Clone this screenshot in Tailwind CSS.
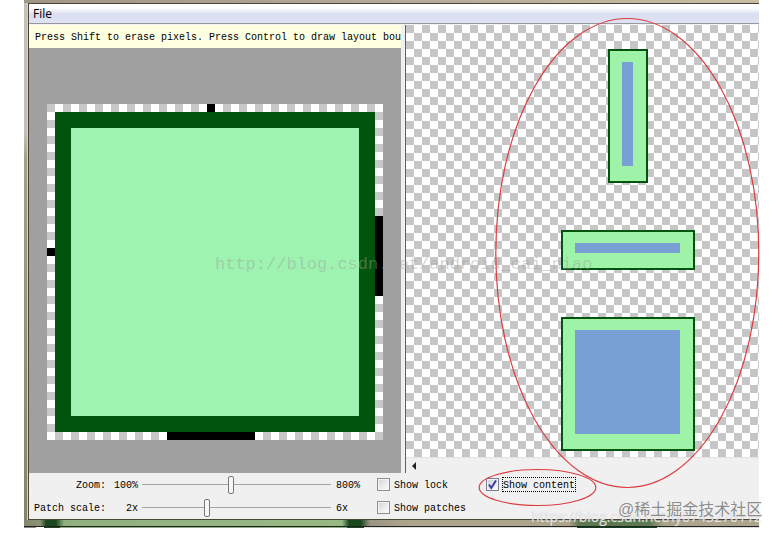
<!DOCTYPE html>
<html lang="en">
<head>
<meta charset="utf-8">
<title>Draw 9-patch</title>
<script src="https://cdn.jsdelivr.net/npm/@tailwindcss/browser@4"></script>
</head>
<body class="bg-white">
<div class="relative mx-6 overflow-hidden font-['Liberation_Mono',monospace] text-[10px] leading-3 text-black">
  <!-- glass frame -->
  <div class="h-[3px] bg-linear-to-r from-[#a09684] via-[#b5a999] to-[#c9bda2]"></div>
  <div class="flex">
    <div class="w-[4px] shrink-0 border-r border-[#d8d4c0] bg-linear-to-b from-[#c4c0b8] from-25% via-[#a5a084] via-30% to-[#84846c]"></div>
    <div class="min-w-0 flex-1 border-t border-b border-l border-[#4a4438]">
      <nav class="flex h-[20px] items-center border-b border-[#98989c] bg-linear-to-b from-white from-20% via-[#d9ddf0] via-55% to-[#dfe3f4]">
        <button class="px-1 font-['Open_Sans',sans-serif] text-[12px] leading-4">File</button>
      </nav>
      <main class="flex border-t border-[#f4f4f4] bg-[#f0f0f0]">
        <section class="flex h-[448px] w-[372px] shrink-0 flex-col bg-[#a0a0a0]">
          <p class="overflow-hidden bg-[#ffffe1] pt-[7px] pb-[4px] pl-[6px] leading-3 whitespace-nowrap">Press Shift to erase pixels. Press Control to draw layout bou</p>
          <svg class="mt-[56px] ml-[18px] block" width="336" height="336" viewBox="0 0 336 336" shape-rendering="crispEdges" role="img" aria-label="Patch editor">
            <defs><pattern id="cells" width="16" height="16" patternUnits="userSpaceOnUse"><path fill="#fff" d="M0 0h16v16H0z"/><path fill="#c8c8c8" d="M0 0h8v8H0zM8 8h8v8H8z"/></pattern></defs>
            <path fill="url(#cells)" d="M0 0h336v336H0z"/>
            <path fill="#00540e" d="M8 8h320v320H8z"/>
            <path fill="#9ef3b0" d="M24 24h288v288H24z"/>
            <path d="M160 0h8v8h-8zM0 144h8v8H0zM328 112h8v80h-8zM120 328h88v8h-88z"/>
          </svg>
        </section>
        <div class="w-[5px] shrink-0 border-r border-[#606060] bg-[#f0f0f0]"></div>
        <section class="flex min-w-0 flex-1 flex-col overflow-hidden">
          <div class="flex h-[432px] w-[444px] flex-col items-center gap-[47px] bg-[conic-gradient(#c6c6c6_25%,#fff_0_50%,#c6c6c6_0_75%,#fff_0)] bg-[position:8px_0px] bg-size-[16px_16px] pt-6">
            <div class="flex h-[134px] w-[40px] border-2 border-[#00540e] bg-[#9ef3a8] pt-[11px] pr-[13px] pb-[15px] pl-[12px]"><div class="flex-1 bg-[#78a0d4]"></div></div>
            <div class="flex h-[40px] w-[134px] border-2 border-[#00540e] bg-[#9ef3a8] pt-[11px] pr-[13px] pb-[15px] pl-[12px]"><div class="flex-1 bg-[#78a0d4]"></div></div>
            <div class="flex h-[134px] w-[134px] border-2 border-[#00540e] bg-[#9ef3a8] pt-[11px] pr-[13px] pb-[15px] pl-[12px]"><div class="flex-1 bg-[#78a0d4]"></div></div>
          </div>
          <div class="flex h-4 items-center border-t border-[#e4e4e4] bg-[#f0f0f0] pl-[6px]">
            <button aria-label="Scroll left"><svg class="block" width="5" height="8" viewBox="0 0 5 8"><path d="M4 0v8L0 4z" fill="#222"/></svg></button>
          </div>
        </section>
      </main>
      <form class="flex h-[46px] bg-[#f0f0f0]">
        <div class="grid w-[333px] shrink-0 grid-cols-[77px_32px_197px_1fr] grid-rows-[23px_23px] items-center">
          <label for="zoom" class="pt-[2px] text-right">Zoom:</label><span class="pt-[2px] text-right">100%</span>
          <input id="zoom" type="range" min="100" max="800" value="428" class="mx-1 h-[20px] appearance-none bg-[linear-gradient(#a4a4a4,#a4a4a4)] bg-size-[100%_1px] bg-center bg-no-repeat [&::-webkit-slider-thumb]:h-[18px] [&::-webkit-slider-thumb]:w-[6px] [&::-webkit-slider-thumb]:appearance-none [&::-webkit-slider-thumb]:rounded-[2px] [&::-webkit-slider-thumb]:border [&::-webkit-slider-thumb]:border-[#777] [&::-webkit-slider-thumb]:bg-[#f6f6f6]">
          <span class="pt-[2px] pl-[1px]">800%</span>
          <label for="scale" class="pt-[2px] text-right">Patch scale:</label><span class="pt-[2px] text-right">2x</span>
          <input id="scale" type="range" min="200" max="600" value="336" class="mx-1 h-[20px] appearance-none bg-[linear-gradient(#a4a4a4,#a4a4a4)] bg-size-[100%_1px] bg-center bg-no-repeat [&::-webkit-slider-thumb]:h-[18px] [&::-webkit-slider-thumb]:w-[6px] [&::-webkit-slider-thumb]:appearance-none [&::-webkit-slider-thumb]:rounded-[2px] [&::-webkit-slider-thumb]:border [&::-webkit-slider-thumb]:border-[#777] [&::-webkit-slider-thumb]:bg-[#f6f6f6]">
          <span class="pt-[2px] pl-[1px]">6x</span>
        </div>
        <div class="grid grid-cols-[109px_auto] grid-rows-[23px_23px] items-center pl-[15px]">
          <label class="flex items-center gap-1"><input type="checkbox" class="size-[13px] appearance-none border border-[#8e8f8f] bg-linear-to-br from-[#d4d4d8] to-white shadow-[inset_0_0_0_1px_#f4f4f4]"><span class="pt-[2px]">Show lock</span></label>
          <label class="flex items-center gap-[3px]"><span class="relative flex"><input type="checkbox" checked class="size-[13px] appearance-none border border-[#7c7c90] bg-linear-to-br from-[#c8ccdc] to-white shadow-[inset_0_0_0_1px_#f4f4f4]"><svg class="pointer-events-none absolute inset-0" width="13" height="13" viewBox="0 0 13 13"><path d="M3 6.5 5.3 10 10 2.5" fill="none" stroke="#3c3c9c" stroke-width="2"/></svg></span><span class="border border-dotted border-black pt-[2px] leading-[11px]">Show content</span></label>
          <label class="flex items-center gap-1"><input type="checkbox" class="size-[13px] appearance-none border border-[#8e8f8f] bg-linear-to-br from-[#d4d4d8] to-white shadow-[inset_0_0_0_1px_#f4f4f4]"><span class="pt-[2px]">Show patches</span></label>
        </div>
      </form>
    </div>
  </div>
  <div class="h-[6px] bg-[linear-gradient(90deg,#84846c_0,#8c9474_16px,#1c4820_22px,#1c4820_32px,#90b080_40px,#98b884_318px,#1c4820_325px,#1c4820_337px,#9c9484_346px,#aca48c_380px,#aca48c_545px,#5c7850_555px,#5c7850_625px,#aca48c_640px,#aca48c_100%)]"></div>
  <div class="h-px bg-[#222]"></div>
  <div class="h-px bg-[linear-gradient(90deg,#888_0_12px,#fff_12px_20px,#1c4820_20px_36px,#8cb080_36px_323px,#1c4820_323px_340px,#ddd_340px_553px,#10401c_553px_633px,#ddd_633px)]"></div>
</div>
<!-- annotations and watermarks -->
<div class="pointer-events-none absolute inset-x-0 top-0 h-[535px] overflow-hidden whitespace-nowrap">
  <svg class="absolute top-0 left-0" width="783" height="535" viewBox="0 0 783 535" fill="none" stroke="#dc3c40" stroke-width="1.2"><ellipse cx="627.3" cy="253" rx="131.5" ry="234.5"/><ellipse cx="537.5" cy="487.5" rx="58.3" ry="18"/></svg>
  <span class="absolute top-[253px] left-[215px] font-['Liberation_Mono',monospace] text-[17px] leading-6 text-[#a0a0a0]/45">http://blog.csdn.net/android_cai_niao</span>
  <span class="absolute top-[507px] left-[531px] font-['Open_Sans',sans-serif] text-[14px] leading-5 text-white/60 text-shadow-[0_0_1px_#c0c0c0]">https://blog.csdn.net/ly0743270112</span>
  <span class="absolute top-[498px] left-[618px] font-['Liberation_Sans','Noto_Sans_CJK_SC',sans-serif] text-[16px] leading-6 text-[#8c8c8c] text-shadow-[0_0_1px_#ffffff]" lang="zh-CN">@稀土掘金技术社区</span>
</div>
</body>
</html>
